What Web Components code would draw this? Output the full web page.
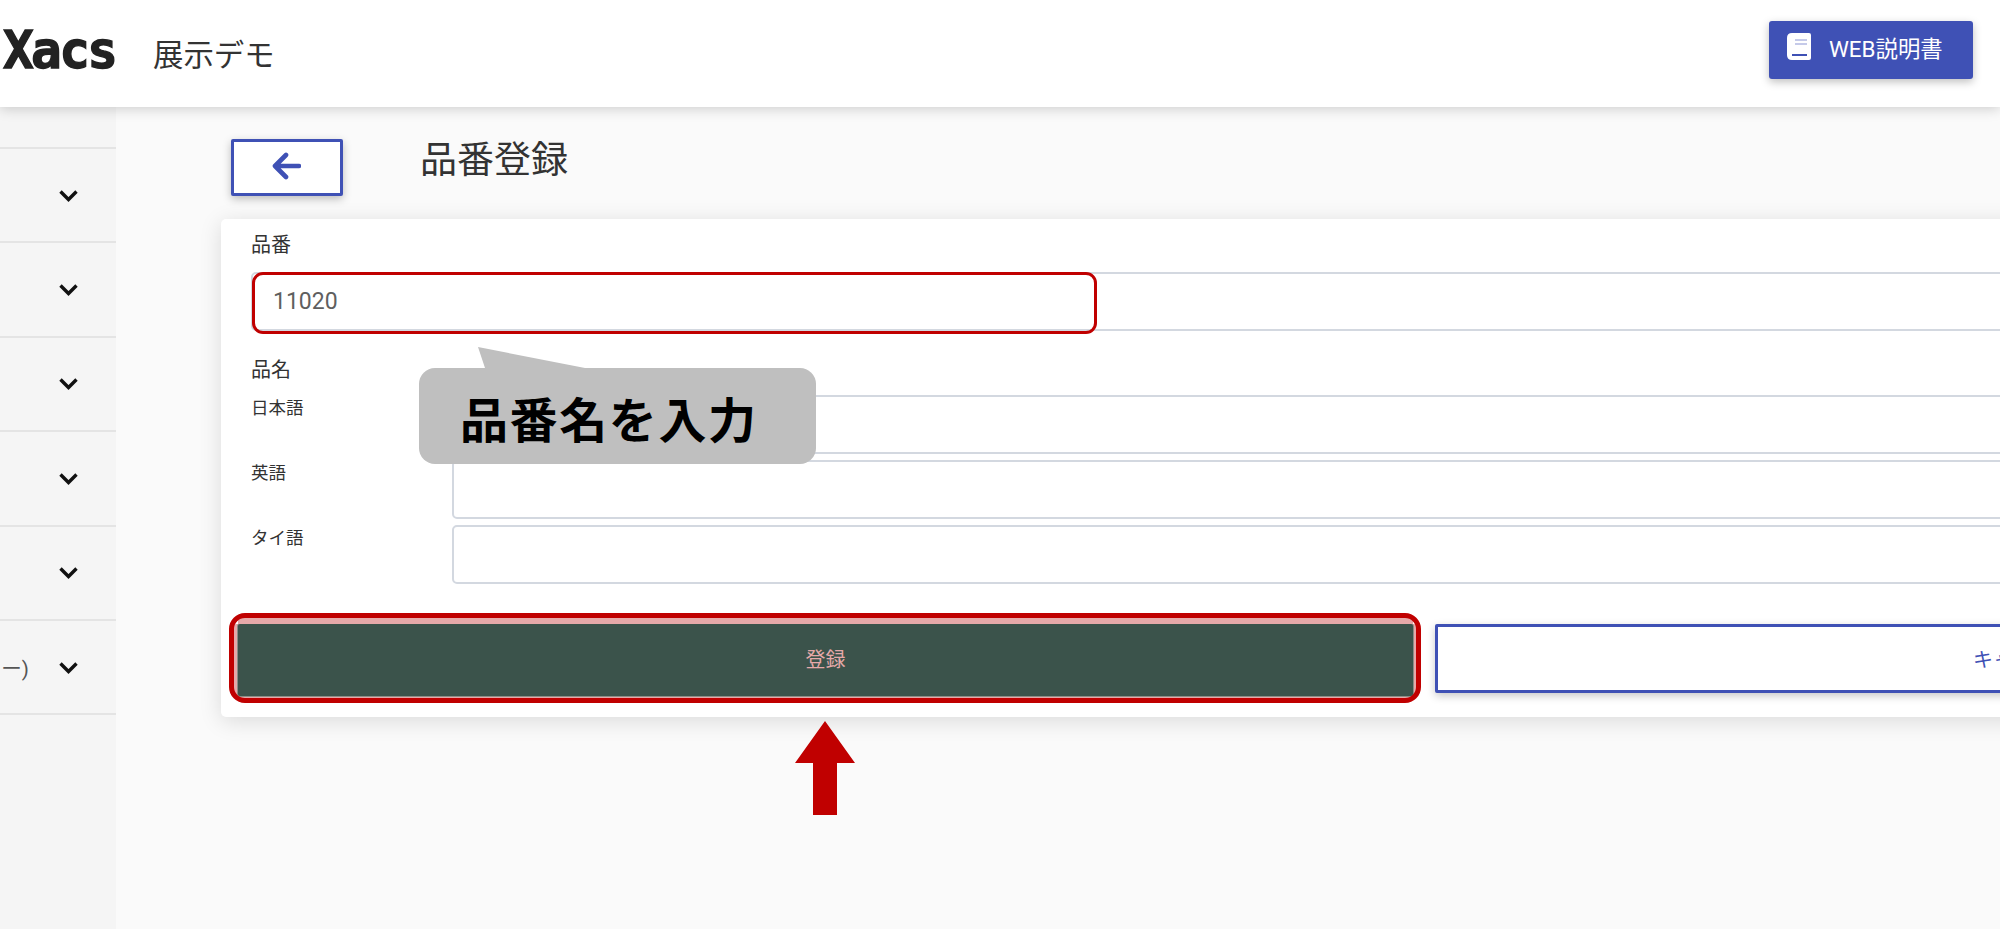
<!DOCTYPE html>
<html lang="ja">
<head>
<meta charset="utf-8">
<title>品番登録</title>
<style>
  html, body { margin: 0; height: 100%; overflow: hidden; }
  body { font-family: Roboto, "Noto Sans CJK JP", sans-serif; color: #333; background: #fafafa; }
</style>
</head>
<body>
<app-shell>
  <app-header slot="header" title-text="展示デモ">
    <doc-button>WEB説明書</doc-button>
  </app-header>
  <side-nav slot="nav">
    <nav-row></nav-row>
    <nav-row></nav-row>
    <nav-row></nav-row>
    <nav-row></nav-row>
    <nav-row></nav-row>
    <nav-row>ー)</nav-row>
  </side-nav>
  <page-head>品番登録</page-head>
  <form-card>
    <form-label>品番</form-label>
    <text-box class="code" value="11020"></text-box>
    <form-label class="name">品名</form-label>
    <lang-row label="日本語"></lang-row>
    <lang-row label="英語"></lang-row>
    <lang-row label="タイ語"></lang-row>
    <action-row>
      <main-button>登録</main-button>
      <sub-button>キャンセル</sub-button>
    </action-row>
    <!-- tutorial annotations lie over the form -->
    <note-ring style="left:31px;top:53px;width:845px;height:62px;--w:3px;--r:11px"></note-ring>
    <note-ring style="left:8px;top:394px;width:1192px;height:90px;--w:5px;--r:16px"></note-ring>
    <note-callout style="left:198px;top:149px">品番名を入力</note-callout>
    <note-arrow style="left:574px;top:502px"></note-arrow>
  </form-card>
</app-shell>

<script>
class AppShell extends HTMLElement {
  constructor() {
    super();
    this.attachShadow({mode: 'open'}).innerHTML = `
      <style>
        :host { display: flex; flex-direction: column; height: 929px; overflow: hidden; }
        .body { display: flex; flex: 1; min-height: 0; }
        main { flex: 1; min-width: 0; padding: 32px 0 0 105px; }
      </style>
      <slot name="header"></slot>
      <div class="body">
        <slot name="nav"></slot>
        <main><slot></slot></main>
      </div>
    `;
  }
}
customElements.define('app-shell', AppShell);

class AppHeader extends HTMLElement {
  constructor() {
    super();
    this.attachShadow({mode: 'open'}).innerHTML = `
      <style>
        :host {
          display: flex; align-items: flex-start; height: 107px; flex: none;
          background: #fff; box-shadow: 0 2px 12px rgba(0,0,0,.18);
          position: relative; z-index: 2; padding: 21px 27px 0 3px; box-sizing: border-box;
        }
        .logo {
          font: bold 51px/60px "DejaVu Sans Mono", monospace; color: #222;
          -webkit-text-stroke: 1.3px #222; letter-spacing: -2.6px; width: 150px;
        }
        .name { font-size: 30.4px; line-height: 44px; margin-top: 13px; flex: 1; color: #333; }
      </style>
      <div class="logo">Xacs</div>
      <div class="name">${this.getAttribute('title-text')}</div>
      <slot></slot>
    `;
  }
}
customElements.define('app-header', AppHeader);

class DocButton extends HTMLElement {
  constructor() {
    super();
    this.attachShadow({mode: 'open'}).innerHTML = `
      <style>
        :host {
          display: flex; align-items: center; gap: 18px; width: 204px; height: 58px;
          box-sizing: border-box; padding: 0 0 7px 18px; background: #3f51b5; color: #fff;
          border-radius: 3px; font-size: 22.4px; box-shadow: 0 3px 8px rgba(0,0,0,.25);
        }
        svg { flex: none; }
      </style>
      <svg width="24" height="27" viewBox="0 0 24 27">
        <path fill="#fff" d="M5 0H22Q24 0 24 2V25Q24 27 22 27H5Q0 27 0 22V5Q0 0 5 0Z"/>
        <path fill="#c5cae9" d="M8 6H20V8H8ZM8 10H20V12H8Z"/>
        <path fill="#3f51b5" d="M5 21H20V23H5Z"/>
      </svg>
      <span><slot></slot></span>
    `;
  }
}
customElements.define('doc-button', DocButton);

class SideNav extends HTMLElement {
  constructor() {
    super();
    this.attachShadow({mode: 'open'}).innerHTML = `
      <style>
        :host {
          display: block; width: 116px; flex: none; background: #f5f5f5;
          box-sizing: border-box; padding-top: 40px; overflow: hidden;
        }
        .top { border-top: 2px solid #e4e4e4; }
      </style>
      <div class="top"><slot></slot></div>
    `;
  }
}
customElements.define('side-nav', SideNav);

class NavRow extends HTMLElement {
  constructor() {
    super();
    this.attachShadow({mode: 'open'}).innerHTML = `
      <style>
        :host {
          display: flex; justify-content: flex-end; align-items: center; gap: 30px;
          height: 94.4px; box-sizing: border-box; padding-right: 38px;
          border-bottom: 2px solid #e4e4e4; white-space: nowrap; font-size: 20.5px; color: #555;
        }
        svg { flex: none; margin-top: 1px; }
      </style>
      <span><slot></slot></span>
      <svg width="19" height="12" viewBox="0 0 19 12">
        <path d="M1.5 1.5L9.5 9.5L17.5 1.5" fill="none" stroke="#111" stroke-width="3.4"/>
      </svg>
    `;
  }
}
customElements.define('nav-row', NavRow);

class PageHead extends HTMLElement {
  constructor() {
    super();
    this.attachShadow({mode: 'open'}).innerHTML = `
      <style>
        :host { display: flex; align-items: flex-start; gap: 77px; height: 80px; margin-left: 10px; }
        .back {
          width: 112px; height: 57px; box-sizing: border-box; border: 3px solid #3f51b5;
          border-radius: 2px; background: #fff; box-shadow: 0 3px 8px rgba(0,0,0,.25);
          display: flex; align-items: center; justify-content: center;
        }
        svg { margin: -3px 2px 0 0; }
        h1 { margin: 0; font-size: 37px; font-weight: 400; line-height: 54px; color: #333; margin-top: -5px; }
      </style>
      <div class="back">
        <svg width="30" height="28" viewBox="0 0 30 28">
          <path d="M28 14H5M15 3L4 14L15 25" fill="none" stroke="#3f51b5" stroke-width="4.6" stroke-linejoin="round" stroke-linecap="round"/>
        </svg>
      </div>
      <h1><slot></slot></h1>
    `;
  }
}
customElements.define('page-head', PageHead);

class FormCard extends HTMLElement {
  constructor() {
    super();
    this.attachShadow({mode: 'open'}).innerHTML = `
      <style>
        :host {
          display: block; position: relative; width: 2409px; box-sizing: border-box;
          padding: 11px 19px 21px 30px; background: #fff; border-radius: 5px;
          box-shadow: 0 4px 22px rgba(0,0,0,.13);
        }
      </style>
      <slot></slot>
    `;
  }
}
customElements.define('form-card', FormCard);

class FormLabel extends HTMLElement {
  constructor() {
    super();
    this.attachShadow({mode: 'open'}).innerHTML = `
      <style>
        :host { display: block; font-size: 20px; line-height: 30px; color: #333; }
        :host(.name) { margin-top: 24px; margin-bottom: 10px; }
      </style>
      <slot></slot>
    `;
  }
}
customElements.define('form-label', FormLabel);

class TextBox extends HTMLElement {
  constructor() {
    super();
    this.attachShadow({mode: 'open'}).innerHTML = `
      <style>
        :host {
          display: block; height: 59px; box-sizing: border-box; border: 2px solid #d3d8e0;
          border-radius: 5px; background: #fff; padding-left: 20px;
          font-size: 23px; line-height: 55px; color: #5f5f5f;
        }
        :host(.code) { margin-top: 12px; }
      </style>
      <span>${this.getAttribute('value') || ''}</span>
    `;
  }
}
customElements.define('text-box', TextBox);

class LangRow extends HTMLElement {
  constructor() {
    super();
    this.attachShadow({mode: 'open'}).innerHTML = `
      <style>
        :host { display: grid; grid-template-columns: 201px 1fr; margin-bottom: 6px; }
        label { font-size: 17.5px; line-height: 26px; color: #333; }
      </style>
      <label>${this.getAttribute('label')}</label>
      <text-box></text-box>
    `;
  }
}
customElements.define('lang-row', LangRow);

class ActionRow extends HTMLElement {
  constructor() {
    super();
    this.attachShadow({mode: 'open'}).innerHTML = `
      <style>
        :host {
          display: grid; grid-template-columns: 1175px 1176px; gap: 22px; align-items: start;
          margin: 40px 0 0 -13px;
        }
      </style>
      <slot></slot>
    `;
  }
}
customElements.define('action-row', ActionRow);

class MainButton extends HTMLElement {
  constructor() {
    super();
    this.attachShadow({mode: 'open'}).innerHTML = `
      <style>
        :host {
          display: flex; align-items: center; justify-content: center; height: 72px;
          box-sizing: border-box; padding-bottom: 3px;
          background: #3b534b; color: #e6a9a9; font-size: 20px; border-radius: 2px;
          box-shadow: 0 1px 0 0 #8d8d86, 1px 0 0 0 #8d8d86, -1px 0 0 0 #8d8d86,
            0 -6px 0 0 #e6a9a9, 4px 0 0 0 #e6a9a9, -4px 0 0 0 #e6a9a9, 0 3px 0 0 #e6a9a9;
        }
      </style>
      <slot></slot>
    `;
  }
}
customElements.define('main-button', MainButton);

class SubButton extends HTMLElement {
  constructor() {
    super();
    this.attachShadow({mode: 'open'}).innerHTML = `
      <style>
        :host {
          display: flex; align-items: center; justify-content: center; height: 69px;
          box-sizing: border-box; border: 3px solid #3f51b5; border-radius: 2px;
          padding-bottom: 1px;
          background: #fff; color: #3f51b5; font-size: 20px;
          box-shadow: 0 3px 8px rgba(0,0,0,.22);
        }
      </style>
      <slot></slot>
    `;
  }
}
customElements.define('sub-button', SubButton);

class NoteRing extends HTMLElement {
  constructor() {
    super();
    this.attachShadow({mode: 'open'}).innerHTML = `
      <style>
        :host {
          position: absolute; box-sizing: border-box;
          border: var(--w) solid #c00000; border-radius: var(--r);
        }
      </style>
    `;
  }
}
customElements.define('note-ring', NoteRing);

class NoteCallout extends HTMLElement {
  constructor() {
    super();
    this.attachShadow({mode: 'open'}).innerHTML = `
      <style>
        :host {
          position: absolute; width: 397px; height: 96px; box-sizing: border-box;
          padding-left: 41px; background: #bfbfbf; border-radius: 16px;
          font-size: 48px; font-weight: 700; line-height: 108px; letter-spacing: 1.6px;
          color: #000; white-space: nowrap;
        }
        svg { position: absolute; left: 58px; top: -21px; }
      </style>
      <svg width="110" height="22" viewBox="0 0 110 22"><path fill="#bfbfbf" d="M1 0L8 21H108Z"/></svg>
      <slot></slot>
    `;
  }
}
customElements.define('note-callout', NoteCallout);

class NoteArrow extends HTMLElement {
  constructor() {
    super();
    this.attachShadow({mode: 'open'}).innerHTML = `
      <style>
        :host { position: absolute; width: 60px; height: 94px; }
        svg { display: block; }
      </style>
      <svg width="60" height="94" viewBox="0 0 60 94"><path fill="#c00000" d="M30 0L60 42H42V94H18V42H0Z"/></svg>
    `;
  }
}
customElements.define('note-arrow', NoteArrow);
</script>
</body>
</html>
